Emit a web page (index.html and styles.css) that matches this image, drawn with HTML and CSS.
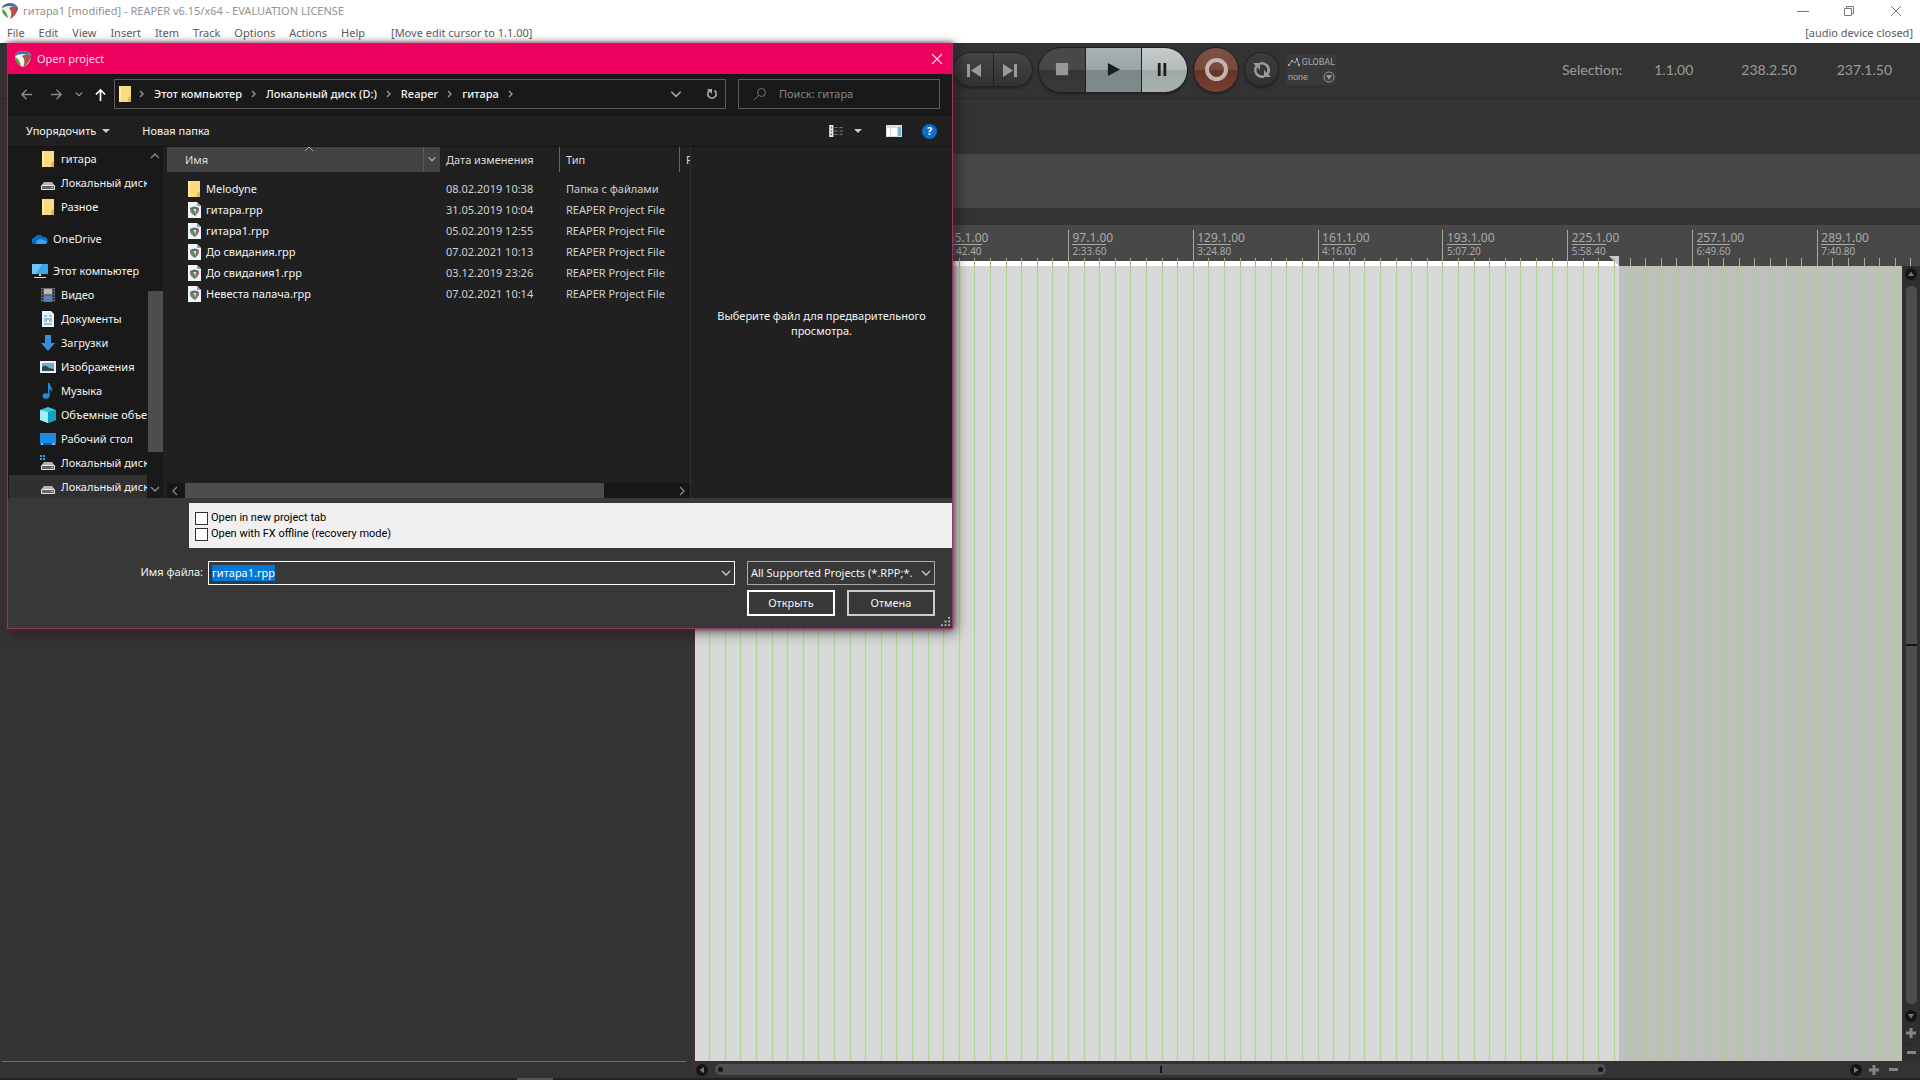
FILE: index.html
```html
<!DOCTYPE html>
<html lang="ru">
<head>
<meta charset="utf-8">
<title>гитара1 [modified] - REAPER v6.15/x64 - EVALUATION LICENSE</title>
<link rel="stylesheet" href="styles.css">
</head>
<body>
<svg class="defs" aria-hidden="true">
  <symbol id="logo" viewBox="0 0 16 16"><path d="M8 0C11 0 14 1 16 4C16 10 13 14 8 16C3 14 0 10 0 4C2 1 5 0 8 0Z" fill="#f2f6f2"/><path d="M0 4C2 1 5 0 8 0C11 0 13 1 15 3L12 4C8 2 4 3 0 5Z" fill="#41719f"/><path d="M0 6C3 7 5 10 6 15C2 13 0 10 0 6Z" fill="#55a03a"/><path d="M7 5C10 3 13 4 16 5C15 10 12 14 8 16C10 12 10 8 7 5Z" fill="#b4504c"/><path d="M12 4L15 3L16 5V8C15 6 14 5 12 4Z" fill="#65628f"/></symbol>
  <symbol id="folder" viewBox="0 0 16 16"><path d="M2 0H14V16H2Z" fill="#fbdc7c"/><path d="M2 0H4V16H2Z" fill="#ffe9a6"/><path d="M11 12L14 10V16H11Z" fill="#e3b64c"/></symbol>
  <symbol id="drive" viewBox="0 0 16 16"><path d="M4 7H12L15 11H1Z" fill="#b5b5b5"/><rect x="1" y="10" width="14" height="5" rx="1" fill="#e6e6e6"/><rect x="2" y="11" width="12" height="3" fill="#666"/><rect x="11" y="12" width="2" height="1" fill="#6fdc5a"/></symbol>
  <symbol id="rpp" viewBox="0 0 14 16"><path d="M1 0H10L14 4V16H1Z" fill="#f1f4f5"/><path d="M10 0L14 4H10Z" fill="#8fa0ad"/><path d="M3 6C6 4 9 4 12 6C12 10 10 12 8 14C5 12 3 10 3 6Z" fill="#58707a"/><path d="M3 7C5 7 7 9 7 13C4 12 3 10 3 7Z" fill="#5c9a4c"/><path d="M6 7L9 7C10 9 9 11 8 13C8 10 8 9 6 7Z" fill="#eef2f0"/><path d="M9 7L12 7C12 10 10 12 8 13Z" fill="#a1685e"/></symbol>
  <symbol id="down" viewBox="0 0 12 12"><path d="M2 4L6 8L10 4" fill="none" stroke="currentColor" stroke-width="1.3"/></symbol>
  <symbol id="right" viewBox="0 0 8 8"><path d="M2 1L5 4L2 7" fill="none" stroke="currentColor" stroke-width="1.4"/></symbol>
  <symbol id="plus" viewBox="0 0 10 10"><path d="M3.500 0H6.500V3.500H10V6.500H6.500V10H3.500V6.500H0V3.500H3.500Z" fill="#858585"/></symbol>
  <symbol id="knob" viewBox="0 0 12 12"><circle cx="6" cy="6" r="6" fill="#151515"/><path d="M3 8L6 3.500L9 8Z" fill="#777"/></symbol>
</svg>

<header class="titlebar">
  <svg class="i16"><use href="#logo"/></svg>
  <h1>гитара1 [modified] - REAPER v6.15/x64 - EVALUATION LICENSE</h1>
  <div class="winbtns">
    <button aria-label="Minimize"><svg viewBox="0 0 12 12"><path d="M0 6.500H12" stroke="#777"/></svg></button>
    <button aria-label="Restore"><svg viewBox="0 0 12 12"><path d="M1.500 3.500H8.500V10.500H1.500ZM3.500 3V1.500H10.500V8.500H9" fill="none" stroke="#777"/></svg></button>
    <button aria-label="Close"><svg viewBox="0 0 12 12"><path d="M1 1L11 11M11 1L1 11" stroke="#777"/></svg></button>
  </div>
</header>
<nav class="menubar">
  <button>File</button><button>Edit</button><button>View</button><button>Insert</button><button>Item</button><button>Track</button><button>Options</button><button>Actions</button><button>Help</button>
  <span class="hint">[Move edit cursor to 1.1.00]</span>
  <span class="audio">[audio device closed]</span>
</nav>

<section class="transport">
  <div class="skip">
    <button aria-label="Go to start"><svg viewBox="0 0 16 16"><path d="M1 2H4V15H1ZM15 2V15L5 8.500Z" fill="#9b9b9b"/></svg></button>
    <button aria-label="Go to end"><svg viewBox="0 0 16 16"><path d="M15 2H12V15H15ZM1 2V15L11 8.500Z" fill="#9b9b9b"/></svg></button>
  </div>
  <div class="play">
    <button class="stop" aria-label="Stop"><svg viewBox="0 0 16 16"><path d="M1 1H14V14H1Z" fill="#979797"/></svg></button>
    <button class="go" aria-label="Play"><svg viewBox="0 0 16 16"><path d="M2 1L15 8L2 15Z" fill="#1c1c1c"/></svg></button>
    <button class="pause" aria-label="Pause"><svg viewBox="0 0 16 16"><path d="M3 1H6V15H3ZM9 1H12V15H9Z" fill="#1c1c1c"/></svg></button>
  </div>
  <button class="record" aria-label="Record"><span></span></button>
  <button class="repeat" aria-label="Repeat"><svg viewBox="0 0 20 20"><path d="M6 15.500A6.800 6.800 0 0 1 5 5.500M8 3.500A6.800 6.800 0 0 1 16 13" fill="none" stroke="#9b9b9b" stroke-width="2.400"/><path d="M14 4.500A6.800 6.800 0 0 1 15 14.500M12 16.500A6.800 6.800 0 0 1 5 14" fill="none" stroke="#9b9b9b" stroke-width="2.400"/><path d="M1 3H8V10Z M19 17H12V10Z" fill="#9b9b9b"/></svg></button>
  <div class="global">
    <div><svg viewBox="0 0 12 8"><path d="M1 7L4 3L7 5L9 1L11 7" fill="none" stroke="#a5a5a5"/><path d="M0 6H2V8H0ZM3 2H5V4H3ZM8 0H10V2H8ZM10 6H12V8H10Z" fill="#a5a5a5"/></svg><span>GLOBAL</span></div>
    <div><span>none</span><svg class="i12" viewBox="0 0 12 12"><circle cx="6" cy="6" r="5" fill="none" stroke="#999"/><path d="M3 4H9L6 9Z" fill="#999"/></svg></div>
  </div>
  <div class="selection"><span>Selection:</span><span>1.1.00</span><span>238.2.50</span><span>237.1.50</span></div>
</section>

<div class="toolspace"></div>
<div class="band"></div>

<main class="workspace">
  <aside class="tracks"><div class="tracklist"></div><div class="trackfoot"></div></aside>
  <section class="timeline">
    <div class="ruler">
      <div class="selbar"></div>
      <ol class="marks">
        <li><b>1.1.00</b><span>0:00.00</span></li><li><b>33.1.00</b><span>0:51.20</span></li><li><b>65.1.00</b><span>1:42.40</span></li><li><b>97.1.00</b><span>2:33.60</span></li><li><b>129.1.00</b><span>3:24.80</span></li><li><b>161.1.00</b><span>4:16.00</span></li><li><b>193.1.00</b><span>5:07.20</span></li><li><b>225.1.00</b><span>5:58.40</span></li><li><b>257.1.00</b><span>6:49.60</span></li><li><b>289.1.00</b><span>7:40.80</span></li>
      </ol>
      <svg class="ticks" id="ticks"></svg>
    </div>
    <div class="view">
      <div class="arrange"><div class="selarea"></div><svg class="grid" id="grid"></svg></div>
      <div class="vscroll">
        <svg class="i12"><use href="#knob"/></svg>
        <div class="vthumb"></div>
        <svg class="i12 flip"><use href="#knob"/></svg>
        <svg class="i10"><use href="#plus"/></svg><i></i><i class="minus"></i>
      </div>
    </div>
    <div class="hscroll">
      <svg class="i12 turnleft"><use href="#knob"/></svg>
      <div class="track"><div class="hthumb"><i class="dot"></i><i class="mid"></i><i class="dot"></i></div></div>
      <svg class="i12 turnright"><use href="#knob"/></svg>
      <svg class="i10"><use href="#plus"/></svg><i class="minus"></i>
    </div>
  </section>
</main>
<footer class="bottom"><i></i></footer>

<section class="dialog" role="dialog" aria-labelledby="dlg">
  <div class="dtitle"><svg class="i16"><use href="#logo"/></svg><h2 id="dlg">Open project</h2><button aria-label="Close"><svg viewBox="0 0 12 12"><path d="M1 1L11 11M11 1L1 11" stroke="#ffd5e4" stroke-width="1.200"/></svg></button></div>
  <div class="dnav">
    <button aria-label="Back"><svg viewBox="0 0 14 14"><path d="M13 7H2M7 2L2 7L7 12" fill="none" stroke="#8a8a8a" stroke-width="1.500"/></svg></button>
    <button aria-label="Forward"><svg viewBox="0 0 14 14"><path d="M1 7H12M7 2L12 7L7 12" fill="none" stroke="#8a8a8a" stroke-width="1.500"/></svg></button>
    <button class="small" aria-label="Recent"><svg class="i10"><use href="#down"/></svg></button>
    <button aria-label="Up"><svg viewBox="0 0 14 14"><path d="M7 14V2M2 7L7 2L12 7" fill="none" stroke="#fff" stroke-width="1.800"/></svg></button>
    <div class="address">
      <svg class="i16"><use href="#folder"/></svg><svg class="sep"><use href="#right"/></svg>
      <a href="#">Этот компьютер</a><svg class="sep"><use href="#right"/></svg>
      <a href="#">Локальный диск (D:)</a><svg class="sep"><use href="#right"/></svg>
      <a href="#">Reaper</a><svg class="sep"><use href="#right"/></svg>
      <a href="#">гитара</a><svg class="sep"><use href="#right"/></svg>
      <button class="drop" aria-label="History"><svg class="i14"><use href="#down"/></svg></button>
      <button class="refresh" aria-label="Refresh"><svg viewBox="0 0 12 12"><path d="M8.500 2.500A4.200 4.200 0 1 1 3.500 2.500" fill="none" stroke="#aaa" stroke-width="1.600"/><path d="M1 1H6V6Z" fill="#aaa"/></svg></button>
    </div>
    <label class="search"><svg viewBox="0 0 14 14"><circle cx="8.500" cy="5.500" r="4" fill="none" stroke="#777"/><path d="M5.500 8.500L1 13" stroke="#777"/></svg><input type="search" placeholder="Поиск: гитара" aria-label="Поиск"></label>
  </div>
  <div class="dtools">
    <button>Упорядочить <i class="tri"></i></button><button>Новая папка</button>
    <button class="viewmode" aria-label="View"><svg viewBox="0 0 16 14"><path d="M0 0H5V14H0Z" fill="#e5e5e5"/><path d="M2 2H3V4H2ZM2 6H3V8H2ZM2 10H3V12H2Z" fill="#333"/><path d="M6 3H10M12 3H16M6 7H10M12 7H16M6 11H10M12 11H16" stroke="#888"/></svg><i class="tri"></i></button>
    <button aria-label="Preview pane"><svg viewBox="0 0 16 12"><path d="M0 0H16V12H0Z" fill="#dcdcdc"/><path d="M1 3H4V11H1ZM5 3H11V11H5Z" fill="#fff"/><path d="M12 2H15V11H12Z" fill="#78b4e0"/></svg></button>
    <button class="help" aria-label="Help">?</button>
  </div>
  <div class="dbody">
    <nav class="places">
      <ul>
        <li><svg class="i16"><use href="#folder"/></svg>гитара</li>
        <li><svg class="i16"><use href="#drive"/></svg>Локальный диск</li>
        <li><svg class="i16"><use href="#folder"/></svg>Разное</li>
        <li class="root"><svg class="i16" viewBox="0 0 16 16"><path d="M3 13A3 3 0 0 1 2 7A5 4.500 0 0 1 11 6A3.500 3.500 0 0 1 13 13Z" fill="#0f6cc4"/><path d="M4 13Q4 9 8 8Q12 8 15 11Q15 13 13 13Z" fill="#36a5ee"/></svg>OneDrive</li>
        <li class="root"><svg class="i16" viewBox="0 0 16 16"><path d="M0 1H16V11H0Z" fill="#3aa6ee"/><path d="M0 1H10L4 11H0Z" fill="#6cc4f8"/><path d="M7 11H9V13H7ZM2 14H14V15H2Z" fill="#d8d8d8"/></svg>Этот компьютер</li>
        <li><svg class="i16" viewBox="0 0 16 16"><path d="M1 1H15V15H1Z" fill="#5d6d7a"/><path d="M4 2H12V7H4Z" fill="#c8b9a5"/><path d="M4 9H12V14H4Z" fill="#5b7db9"/><path d="M2.500 2V15M13.500 2V15" stroke="#16191c" stroke-dasharray="2 1" stroke-width="1.500"/></svg>Видео</li>
        <li><svg class="i16" viewBox="0 0 16 16"><path d="M2 0H11L14 3V16H2Z" fill="#eef4f6"/><path d="M4 5H7M9 5H12M4 8H12M4 10H7M9 10H12M4 13H12" stroke="#338fae"/></svg>Документы</li>
        <li><svg class="i16" viewBox="0 0 16 16"><path d="M5 0H11V8H15L8 16L1 8H5Z" fill="#3590dc"/></svg>Загрузки</li>
        <li><svg class="i16" viewBox="0 0 16 16"><path d="M0 2H16V14H0Z" fill="#eee"/><path d="M2 4H14V12H2Z" fill="#78abc4"/><path d="M2 8Q6 5 9 9L14 10V12H2Z" fill="#294956"/></svg>Изображения</li>
        <li><svg class="i16" viewBox="0 0 16 16"><ellipse cx="6" cy="13" rx="3.500" ry="2.800" fill="#1f8fe3"/><path d="M8 0H9.500C10 4 13 4 12 10C12 7 10 6 9.500 6V13H8Z" fill="#1f8fe3"/></svg>Музыка</li>
        <li><svg class="i16" viewBox="0 0 16 16"><path d="M0 3L8 0L16 3V13L8 16L0 13Z" fill="#36c6e0"/><path d="M0 3L8 5V16L0 13Z" fill="#9ff0f4"/><path d="M8 5L16 3V13L8 16Z" fill="#149fc0"/></svg>Объемные объекты</li>
        <li><svg class="i16" viewBox="0 0 16 16"><path d="M0 2H16V14H0Z" fill="#188ce8"/><path d="M0 12H16V14H0Z" fill="#0b62ad"/><path d="M1 13H3M12 13H15" stroke="#fff"/></svg>Рабочий стол</li>
        <li><svg class="i16" viewBox="0 0 16 16"><use href="#drive"/><path d="M0 0H2V2H0ZM3 0H5V2H3ZM0 3H2V5H0ZM3 3H5V5H3Z" fill="#25a5ec"/></svg>Локальный диск</li>
        <li class="current"><svg class="i16"><use href="#drive"/></svg>Локальный диск</li>
      </ul>
      <div class="pscroll"><svg class="i12 flip"><use href="#down"/></svg><div></div><svg class="i12"><use href="#down"/></svg></div>
    </nav>
    <div class="files">
      <div class="tablewrap">
      <table>
        <colgroup><col class="cname"><col class="cdate"><col class="ctype"><col class="csize"></colgroup>
        <thead><tr><th class="sorted">Имя<svg class="sortmark" viewBox="0 0 12 12"><path d="M2 8L6 4L10 8" fill="none" stroke="#aaa"/></svg><span class="colmenu"><svg class="i10"><use href="#down"/></svg></span></th><th>Дата изменения</th><th>Тип</th><th>Размер</th></tr></thead>
        <tbody>
          <tr><td><svg class="i16"><use href="#folder"/></svg>Melodyne</td><td>08.02.2019 10:38</td><td>Папка с файлами</td><td></td></tr>
          <tr><td><svg class="i16"><use href="#rpp"/></svg>гитара.rpp</td><td>31.05.2019 10:04</td><td>REAPER Project File</td><td></td></tr>
          <tr><td><svg class="i16"><use href="#rpp"/></svg>гитара1.rpp</td><td>05.02.2019 12:55</td><td>REAPER Project File</td><td></td></tr>
          <tr><td><svg class="i16"><use href="#rpp"/></svg>До свидания.rpp</td><td>07.02.2021 10:13</td><td>REAPER Project File</td><td></td></tr>
          <tr><td><svg class="i16"><use href="#rpp"/></svg>До свидания1.rpp</td><td>03.12.2019 23:26</td><td>REAPER Project File</td><td></td></tr>
          <tr><td><svg class="i16"><use href="#rpp"/></svg>Невеста палача.rpp</td><td>07.02.2021 10:14</td><td>REAPER Project File</td><td></td></tr>
        </tbody>
      </table>
      </div>
      <div class="fscroll"><svg class="i12 turnright"><use href="#down"/></svg><div><i></i></div><svg class="i12 turnleft"><use href="#down"/></svg></div>
    </div>
    <p class="preview">Выберите файл для предварительного просмотра.</p>
  </div>
  <div class="dfoot">
    <div class="opts">
      <label><input type="checkbox">Open in new project tab</label>
      <label><input type="checkbox">Open with FX offline (recovery mode)</label>
    </div>
    <div class="form">
      <label class="flabel" for="fname">Имя файла:</label>
      <div class="combo"><input id="fname" type="text" value="гитара1.rpp" autocomplete="off" spellcheck="false"><svg class="i12"><use href="#down"/></svg></div>
      <div class="filter"><select aria-label="Тип файлов"><option>All Supported Projects (*.RPP;*.</option></select><svg class="i12"><use href="#down"/></svg></div>
      <div class="actions"><button class="ok">Открыть</button><button>Отмена</button></div>
    </div>
    <svg class="grip" viewBox="0 0 10 10"><path d="M8 0H10V2H8ZM4 4H6V6H4ZM8 4H10V6H8ZM0 8H2V10H0ZM4 8H6V10H4ZM8 8H10V10H8Z" fill="#bbb"/></svg>
  </div>
</section>
<script src="script.js"></script>
</body>
</html>
```
FILE: styles.css
```css
* { box-sizing: border-box; }
html, body { height: 100%; }
body { margin: 0; min-height: 100vh; display: flex; flex-direction: column; background: #333; font: 11px/16px "Noto Sans", "Open Sans", sans-serif; color: #f4f4f4; overflow: hidden; }
h1, h2, p, ul, ol { margin: 0; padding: 0; font-weight: 400; list-style: none; }
h1, h2 { font-size: 11px; }
button { border: 0; padding: 0; background: none; color: inherit; font: inherit; display: flex; align-items: center; justify-content: center; }
input, select { font: inherit; color: inherit; }
a { color: inherit; text-decoration: none; }
svg { display: block; flex: none; }
.defs { position: absolute; width: 0; height: 0; }
.i16 { width: 16px; height: 16px; }
.i14 { width: 14px; height: 14px; }
.i12 { width: 12px; height: 12px; }
.i10 { width: 10px; height: 10px; }
.flip { transform: rotate(180deg); }
.turnleft { transform: rotate(-90deg); }
.turnright { transform: rotate(90deg); }

.titlebar { flex: none; height: 22px; display: flex; align-items: center; gap: 5px; padding-left: 2px; background: #fff; color: #929292; }
.winbtns { margin-left: auto; display: flex; }
.winbtns button { width: 46px; height: 22px; }
.winbtns svg { width: 12px; height: 12px; }
.winbtns button:last-child { width: 48px; }
.menubar { flex: none; height: 21px; display: flex; align-items: center; gap: 14px; padding: 0 7px; background: #fff; color: #5c5c5c; }
.hint { margin-left: 12px; }
.audio { margin-left: auto; }

.transport { flex: none; height: 56px; display: flex; align-items: center; gap: 5px; padding: 0 28px 2px 953px; border-bottom: 1px solid #292929; }
.skip { display: flex; height: 35px; border: 1px solid #202020; border-radius: 18px; background: linear-gradient(#454545, #323232); box-shadow: 0 2px 2px #262626; }
.skip button { width: 39px; }
.skip button + button { border-left: 1px solid #202020; padding-right: 6px; }
.skip svg { width: 16px; height: 16px; }
.play { display: flex; height: 46px; border: 1px solid #1f1f1f; border-radius: 23px; overflow: hidden; background: #1f1f1f; gap: 1px; box-shadow: 0 2px 2px #262626; }
.play svg { width: 15px; height: 15px; }
.stop { width: 46px; background: linear-gradient(#484848 50%, #343434 50%, #3a3a3a); }
.go { width: 55px; background: linear-gradient(#a8b2b2, #9aa7a7 50%, #7c8887 50%, #7f8b8a); }
.pause { width: 45px; padding-right: 4px; background: linear-gradient(#c5cccb, #b4bcbb 50%, #9faaa8 50%, #a8b1b0); }
.record { width: 46px; height: 46px; border: 1px solid #1f1f1f; border-radius: 50%; background: linear-gradient(#7e5146, #75493e 50%, #663424 50%, #79412f); box-shadow: 0 2px 2px #262626; }
.record span { width: 23px; height: 23px; border: 4px solid #c4b3ae; border-radius: 50%; }
.repeat { width: 35px; height: 35px; border: 1px solid #202020; border-radius: 50%; background: linear-gradient(#3d3d3d, #303030); box-shadow: 0 2px 2px #262626; }
.repeat svg { width: 20px; height: 20px; }
.global { width: 50px; margin-left: 2px; padding: 0 1px 0 2px; font-size: 9px; line-height: 15px; color: #a8a8a8; background: #3a3a3a; font-family: Roboto, sans-serif; }
.global div { display: flex; align-items: center; justify-content: space-between; }
.global div:first-child svg { width: 12px; height: 8px; }
.selection { margin-left: auto; display: flex; color: #9c9c9c; font: 14px/20px Lato, sans-serif; }
.selection span:nth-child(2) { margin-left: 32px; }
.selection span:nth-child(3) { margin-left: 48px; }
.selection span:nth-child(4) { margin-left: 40px; }
.toolspace { flex: none; height: 55px; }
.band { flex: none; height: 54px; margin-left: 695px; background: #484848; }

.workspace { flex: 1; display: flex; min-height: 0; padding-top: 17px; }
.tracks { width: 695px; flex: none; display: flex; flex-direction: column; border-right: 1px solid #5a2a2e; }
.tracklist { flex: 1; margin: 0 8px 0 2px; border-bottom: 1px solid #6e6e6e; }
.trackfoot { height: 16px; }
.timeline { flex: 1; min-width: 0; display: flex; flex-direction: column; }
.ruler { position: relative; flex: none; height: 41px; background: #484848; overflow: hidden; }
.selbar { position: absolute; left: 0; bottom: 0; width: 75.430%; height: 5px; background: #fff; }
.selbar::after { content: ""; position: absolute; right: 0; bottom: 0; border-top: 10px solid #c9c9c9; border-left: 10px solid transparent; }
.ticks, .grid { position: absolute; inset: 0; width: 100%; height: 100%; }
.marks { display: flex; padding-top: 6px; color: #aaa; }
.marks li { flex: 0 0 10.190%; padding-left: 3px; display: flex; flex-direction: column; align-items: flex-start; }
.marks b { font-weight: 400; font-size: 12px; line-height: 13px; }
.marks span { border-top: 1px solid #aaa; font-size: 10px; line-height: 13px; }
.view { flex: 1; display: flex; min-height: 0; }
.arrange { position: relative; flex: 1; background: #bebfbe; }
.selarea { position: absolute; inset: 0 auto 0 0; width: 924px; background: #d7d8d7; }
.vscroll { width: 18px; flex: none; display: flex; flex-direction: column; align-items: center; gap: 6px; padding: 2px 0 7px; background: #2f2f2f; }
.vthumb { flex: 1; width: 11px; border-radius: 5px; background: #4d4d4d; display: flex; align-items: center; }
.vthumb::after { content: ""; width: 11px; height: 2px; background: #151515; }
.vscroll i { width: 8px; height: 1px; background: #222; }
.vscroll i.minus, i.minus { width: 9px; height: 3px; background: #858585; }
.hscroll { height: 17px; flex: none; display: flex; align-items: center; gap: 7px; padding: 0 22px 0 1px; background: #333; }
.hscroll .minus { margin-left: 3px; }
.track { flex: 1; }
.hthumb { width: 79%; height: 11px; padding: 0 3px; border-radius: 5px; background: #4f4f4f; display: flex; justify-content: space-between; align-items: center; }
.dot { width: 5px; height: 5px; border-radius: 50%; background: #151515; }
.mid { width: 2px; height: 7px; background: #151515; }
.bottom { flex: none; height: 2px; padding-left: 517px; background: #222; }
.bottom i { display: block; width: 36px; height: 2px; background: #555; }

.dialog { position: absolute; left: 7px; top: 43px; width: 946px; border: 1px solid #8c3c63; background: #202020; box-shadow: 0 0 6px #64233f, 4px 4px 12px #0006; }
.dtitle { height: 30px; display: flex; align-items: center; gap: 6px; padding-left: 7px; background: #ee005f; color: #ffd9e8; }
.dtitle button { margin-left: auto; width: 30px; height: 30px; }
.dtitle button svg { width: 12px; height: 12px; }
.dnav { height: 42px; display: flex; align-items: center; padding: 0 12px 2px 3px; background: #191919; }
.dnav > button { width: 30px; height: 30px; }
.dnav > button > svg:not(.i10) { width: 13px; height: 13px; }
.dnav > button.small { width: 16px; color: #999; }
.dnav > button.small + button { width: 27px; }
.address { flex: 1; height: 30px; display: flex; align-items: center; border: 1px solid #5c5c5c; padding-left: 2px; gap: 8px; font-weight: 500; }
.address .i16 { margin-right: -3px; }
.sep { width: 8px; height: 8px; color: #999; }
.drop { margin-left: auto; color: #aaa; width: 30px; height: 28px; }
.refresh { width: 26px; height: 28px; }
.refresh svg { width: 12px; height: 12px; }
.search { width: 202px; height: 30px; margin-left: 12px; border: 1px solid #5c5c5c; display: flex; align-items: center; padding-left: 14px; gap: 12px; }
.search svg { width: 14px; height: 14px; }
.search input { flex: 1; min-width: 0; border: 0; padding: 0; background: none; outline: 0; }
.search input::placeholder { color: #858585; opacity: 1; }
.dtools { height: 31px; display: flex; align-items: center; gap: 24px; padding: 0 15px 0 18px; border-bottom: 1px solid #161616; }
.tri { border: 4px solid transparent; border-top-color: #ccc; border-bottom: 0; margin-left: 6px; }
.dtools > button:nth-child(2) { margin-left: 8px; }
.viewmode { margin-left: auto; }
.dtools svg { width: 16px; height: 12px; }
.viewmode .tri { margin-left: 10px; }
.dtools .help { width: 15px; height: 15px; border-radius: 50%; background: #0b6fc8; color: #fff; font-weight: 700; margin-left: -4px; }

.dbody { display: flex; height: 351px; }
.places { width: 155px; flex: none; display: flex; background: #191919; padding-left: 1px; }
.places ul { flex: 1; min-width: 0; overflow: hidden; }
.places li { height: 24px; padding-left: 31px; display: flex; align-items: center; gap: 5px; white-space: nowrap; }
.places .root { height: 32px; padding: 8px 0 0 23px; }
.places .current { background: #303030; }
.pscroll { width: 16px; flex: none; display: flex; flex-direction: column; align-items: center; justify-content: space-between; padding: 3px 0; color: #888; }
.pscroll div { width: 15px; height: 161px; margin-top: 97px; background: #4d4d4d; }
.files { width: 528px; flex: none; padding-left: 4px; border-right: 1px solid #303030; display: flex; flex-direction: column; }
.tablewrap { flex: 1; overflow: hidden; }
table { width: 572px; table-layout: fixed; border-collapse: separate; border-spacing: 0; }
.cname { width: 273px; }
.cdate, .ctype { width: 120px; }
th { height: 25px; padding: 0 6px; text-align: left; font-weight: 400; color: #ddd; border-right: 1px solid #666; white-space: nowrap; overflow: hidden; }
th:last-child { border: 0; }
thead::after { content: ""; display: block; height: 6px; }
th.sorted { position: relative; padding-left: 18px; background: #434343; border: 0; }
.sortmark { position: absolute; left: 136px; top: -4px; width: 12px; height: 12px; }
.colmenu { position: absolute; right: 0; top: 0; height: 25px; padding: 7px 3px; border-left: 1px solid #5a5a5a; color: #bbb; }
td { height: 21px; padding: 0 6px; color: #d0d0d0; white-space: nowrap; }
td:first-child { padding-left: 19px; display: flex; align-items: center; gap: 4px; color: #f4f4f4; }
.fscroll { height: 15px; display: flex; align-items: center; gap: 4px; padding: 0 2px; background: #171717; color: #888; }
.fscroll div { flex: 1; }
.fscroll i { display: block; width: 86%; height: 15px; background: #4d4d4d; }
.preview { flex: 1; padding: 0 20px; display: grid; place-content: center; text-align: center; line-height: 15px; }

.dfoot { position: relative; height: 130px; padding-top: 5px; background: #383838; }
.opts { height: 45px; margin-left: 181px; padding: 7px 6px; background: #f0f0f0; color: #000; font: 11px/16px Roboto, sans-serif; }
.opts label { display: flex; align-items: center; gap: 3px; }
.opts input { appearance: none; width: 13px; height: 13px; margin: 0; border: 1px solid #333; background: #fff; }
.form { display: grid; grid-template-columns: 200px 1fr 188px; column-gap: 12px; row-gap: 5px; padding: 13px 17px 0 0; }
.flabel { text-align: right; line-height: 22px; padding-right: 5px; }
.form > .combo { margin-left: -12px; }
.combo, .filter { display: flex; align-items: center; height: 24px; border: 1px solid #fff; color: #ccc; padding-right: 2px; }
.filter { border-color: #aaa; }
.combo input { flex: 1; min-width: 0; padding: 0 3px; border: 0; background: none; outline: 0; color: #fff; }
.combo input::selection { background: #0078d7; color: #fff; }
.filter select { flex: 1; min-width: 0; appearance: none; border: 0; padding: 0 0 0 3px; background: none; color: #f4f4f4; }
.actions { grid-column: 3; display: flex; gap: 12px; }
.actions button { flex: 1; height: 26px; border: 2px solid #ccc; }
.actions .ok { border-color: #fff; }
.grip { position: absolute; right: 2px; bottom: 2px; width: 9px; height: 9px; }
```
FILE: script.js
```js
// Draws the ruler ticks and the arrange grid, one line every four bars.
const NS = "http://www.w3.org/2000/svg";
const ticks = document.getElementById("ticks");
const grid = document.getElementById("grid");

function bar(svg, x, y, w, h, fill) {
  const r = document.createElementNS(NS, "rect");
  r.setAttribute("x", x);
  r.setAttribute("y", y);
  r.setAttribute("width", w);
  r.setAttribute("height", h);
  r.setAttribute("fill", fill);
  svg.append(r);
}

function draw() {
  const width = ticks.clientWidth;
  const step = width * 0.012735;
  const selEnd = Math.round(width * 0.7543);
  document.querySelector(".selarea").style.width = selEnd + "px";
  ticks.replaceChildren();
  grid.replaceChildren();
  for (let k = 1; k * step < width; k++) {
    const x = Math.floor(k * step) - 1;
    const major = k % 8 === 0;
    bar(ticks, x, major ? 5 : 33, 1, major ? 36 : 8, "#a9a9a0");
    if (x < selEnd) {
      bar(grid, x - 1, 0, 3, "100%", "#cddcc4");
      bar(grid, x, 0, 1, "100%", "#acd795");
    } else {
      bar(grid, x - 3, 0, 7, "100%", "#b6c4b0");
    }
  }
}
draw();
addEventListener("resize", draw);
const field = document.getElementById("fname");
field.focus();
field.select();
```
